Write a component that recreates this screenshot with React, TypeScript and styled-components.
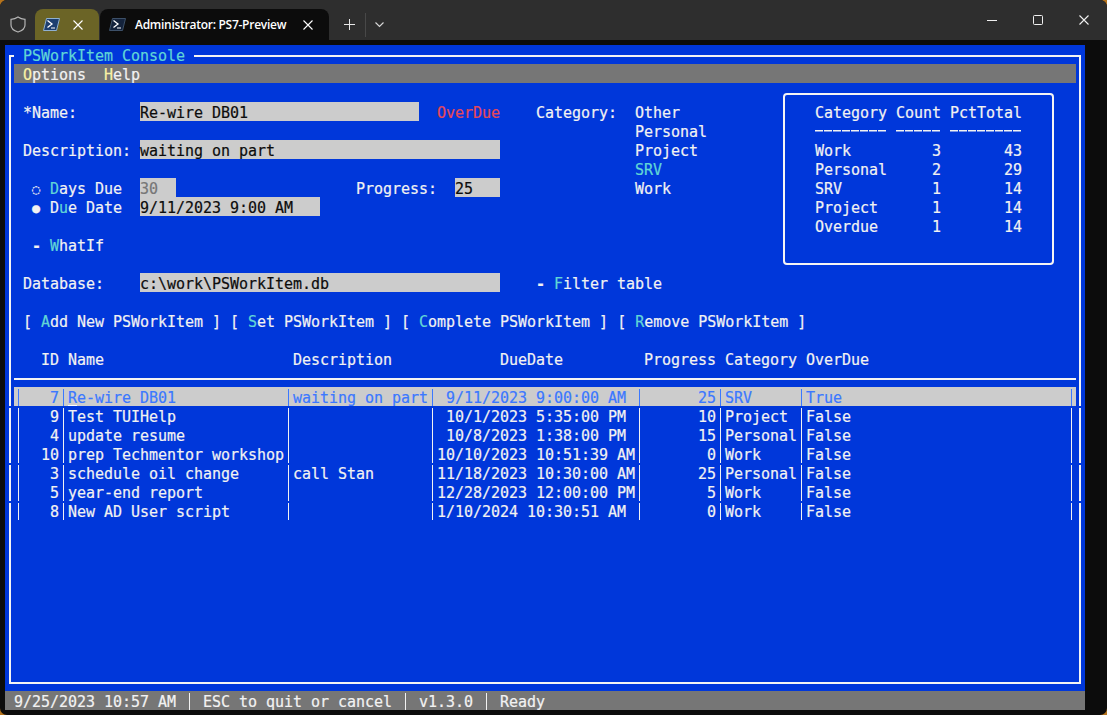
import React from "react";
import styled, { createGlobalStyle } from "styled-components";

const CW = 9;
const BLUE = "#0037DA";
const WHITE = "#F2F2F2";
const GRAY = "#767676";
const FIELD = "#CCCCCC";
const CYAN = "#61D6D6";
const ACCENT = "#3B78FF";

const Global = createGlobalStyle`
  html, body { margin: 0; padding: 0; background: #b5731c; }
  #root { width: 1107px; height: 715px; overflow: hidden; }
`;

const Win = styled.div`
  width: 1107px;
  height: 715px;
  background: #0c0c0c;
  border-radius: 7px;
  overflow: hidden;
  display: flex;
  flex-direction: column;
`;

const Strip = styled.header`
  height: 40px;
  flex: none;
  background: #2e2e2e;
  display: flex;
  align-items: flex-end;
`;

const Slot = styled.div<{ $w: number; $h?: number }>`
  width: ${(p) => p.$w}px;
  height: ${(p) => p.$h ?? 31}px;
  flex: none;
  display: flex;
  align-items: center;
  justify-content: center;
`;

const Tab = styled.div<{ $active?: boolean }>`
  height: 31px;
  flex: none;
  box-sizing: border-box;
  width: ${(p) => (p.$active ? 229 : 64)}px;
  margin-right: ${(p) => (p.$active ? 4 : 1)}px;
  padding-left: ${(p) => (p.$active ? 9 : 8)}px;
  background: ${(p) => (p.$active ? "#0c0c0c" : "#6b6426")};
  border-radius: 8px 8px 0 0;
  display: flex;
  align-items: center;
`;

const TabTitle = styled.span`
  font-family: "Open Sans", "Noto Sans", sans-serif;
  font-size: 12px;
  font-weight: 600;
  letter-spacing: -0.27px;
  color: #ffffff;
  margin-left: 9px;
  width: 168px;
  flex: none;
  white-space: nowrap;
`;

const TabClose = styled.span<{ $gap: number }>`
  margin-left: ${(p) => p.$gap}px;
  display: flex;
`;

const StripSep = styled.div`
  width: 1px;
  height: 24px;
  flex: none;
  margin-bottom: 3px;
  background: #484848;
`;

const StripFill = styled.div`
  flex: 1;
`;

const Screen = styled.main`
  width: 1080px;
  height: 665px;
  margin: 5px 0 0 5px;
  background: ${BLUE};
  color: ${WHITE};
  font-family: "DejaVu Sans Mono", "Liberation Mono", monospace;
  font-size: 15px;
  letter-spacing: -0.03px;
  line-height: 23px;
  -webkit-text-stroke: 0.2px;
  display: flex;
  flex-direction: column;
`;

const Frame = styled.section`
  position: relative;
  box-sizing: border-box;
  width: 1072px;
  height: 629px;
  flex: none;
  margin: 10px 4px 7px 4px;
  padding: 7px 3px 0 3px;
  border: 2px solid #f4f4f4;
`;

const FrameTitle = styled.h1`
  position: absolute;
  left: 3px;
  top: -12px;
  margin: 0;
  padding: 0 9px;
  background: ${BLUE};
  color: ${CYAN};
  font: inherit;
  height: 19px;
`;

const Menu = styled.nav`
  height: 19px;
  background: ${GRAY};
  padding-left: ${CW}px;
  display: flex;
  white-space: pre;
`;

const Line = styled.div`
  height: 19px;
  display: flex;
  white-space: pre;
`;

const Gap = styled.span<{ $w: number }>`
  width: ${(p) => p.$w * CW}px;
  flex: none;
`;

const Cell = styled.span<{ $w: number; $end?: boolean; $color?: string }>`
  width: ${(p) => p.$w * CW}px;
  flex: none;
  white-space: pre;
  text-align: ${(p) => (p.$end ? "right" : "left")};
  color: ${(p) => p.$color ?? "inherit"};
`;

const Field = styled(Cell)<{ $off?: boolean }>`
  background: ${FIELD};
  color: ${(p) => (p.$off ? GRAY : "#0C0C0C")};
`;

const CheckMark = styled(Cell)`
  font-weight: 700;
`;

const Hot = styled.span`
  color: ${CYAN};
`;

const MenuHot = styled.span`
  color: #f9f1a5;
`;

const Radio = styled.span`
  width: ${2 * CW}px;
  flex: none;
  font-size: 13.5px;
  text-align: left;
`;

const Top = styled.div`
  display: flex;
  height: ${19 * 14}px;
`;

const Form = styled.div`
  width: ${85 * CW}px;
  flex: none;
  padding-top: 19px;
`;

const StatBox = styled.aside`
  box-sizing: border-box;
  width: 271px;
  height: 172px;
  flex: none;
  margin: 10px 0 0 4px;
  padding: 7px 0 0 30px;
  border: 2px solid #f4f4f4;
  border-radius: 4px;
`;

const DashCell = styled(Cell)`
  color: transparent;
  background: repeating-linear-gradient(90deg, ${WHITE} 0 8px, transparent 8px 9px) 0 50% / 100% 1.5px no-repeat;
`;

const Rule = styled.div`
  height: 2px;
  margin: 10px 0 7px;
  background: #f4f4f4;
`;

const TableRow = styled.div<{ $sel?: boolean; $cut?: boolean }>`
  position: relative;
  height: 19px;
  display: flex;
  white-space: pre;
  background: ${(p) => (p.$sel ? FIELD : "transparent")};
  color: ${(p) => (p.$sel ? ACCENT : "inherit")};
  ${(p) =>
    p.$cut
      ? `
    &::before, &::after {
      content: "";
      position: absolute;
      top: 0;
      width: 2px;
      height: 2px;
      background: ${BLUE};
    }
    &::before { left: -5px; }
    &::after { right: -5px; }
  `
      : ""}
`;

const Bar = styled.span<{ $cut?: boolean }>`
  width: ${CW}px;
  flex: none;
  display: flex;
  justify-content: center;
  &::before {
    content: "";
    width: 1.5px;
    margin-top: ${(p) => (p.$cut ? 2 : 0)}px;
    background: currentColor;
  }
`;

const NameCell = styled(Cell)`
  position: relative;
`;

const Cursor = styled.i`
  position: absolute;
  left: 0;
  bottom: 0;
  width: ${CW}px;
  height: 1px;
  background: #ffffff;
`;

const Status = styled.footer`
  height: 19px;
  flex: none;
  display: flex;
  white-space: pre;
  background: ${GRAY};
`;

type Row = { id: string; name: string; desc: string; due: string; prog: string; cat: string; over: string };

const rows: Row[] = [
  { id: "7", name: "Re-wire DB01", desc: "waiting on part", due: " 9/11/2023 9:00:00 AM", prog: "25", cat: "SRV", over: "True" },
  { id: "9", name: "Test TUIHelp", desc: "", due: " 10/1/2023 5:35:00 PM", prog: "10", cat: "Project", over: "False" },
  { id: "4", name: "update resume", desc: "", due: " 10/8/2023 1:38:00 PM", prog: "15", cat: "Personal", over: "False" },
  { id: "10", name: "prep Techmentor workshop", desc: "", due: "10/10/2023 10:51:39 AM", prog: "0", cat: "Work", over: "False" },
  { id: "3", name: "schedule oil change", desc: "call Stan", due: "11/18/2023 10:30:00 AM", prog: "25", cat: "Personal", over: "False" },
  { id: "5", name: "year-end report", desc: "", due: "12/28/2023 12:00:00 PM", prog: "5", cat: "Work", over: "False" },
  { id: "8", name: "New AD User script", desc: "", due: "1/10/2024 10:30:51 AM", prog: "0", cat: "Work", over: "False" },
];
const cutRows = new Set([0, 1, 4, 6]);

const stats = [
  ["Work", "3", "43"],
  ["Personal", "2", "29"],
  ["SRV", "1", "14"],
  ["Project", "1", "14"],
  ["Overdue", "1", "14"],
];

const PsIcon = ({ dark }: { dark?: boolean }) => (
  <svg width="17" height="13" viewBox="0 0 17 13" fill="none">
    <path d="M3.5 .5H16.5L13.5 12.5H.5Z" fill={dark ? "#14233c" : "#1d3f70"} stroke={dark ? "#3d5068" : "#8fb0d0"} strokeWidth="1" />
    <path d="M4.5 2.5 9 6 4.5 9.5" stroke="#fff" strokeWidth="1.3" />
    <path d="M8 10H12" stroke="#fff" strokeWidth="1.2" />
  </svg>
);

const Cross = ({ size = 10, color = "#fff" }: { size?: number; color?: string }) => (
  <svg width={size} height={size} viewBox="0 0 10 10" fill="none">
    <path d="M.5 .5 9.5 9.5M9.5 .5 .5 9.5" stroke={color} strokeWidth="1.1" />
  </svg>
);

export default function App() {
  return (
    <Win>
      <Global />
      <Strip>
        <Slot $w={35}>
          <svg width="16" height="17" viewBox="0 0 16 17" fill="none">
            <path d="M8 1C5.8 2.6 3.6 3.2 1 3.3V9c0 3.4 3 5.8 7 7 4-1.2 7-3.6 7-7V3.3C12.4 3.2 10.2 2.6 8 1Z" stroke="#b4b4b4" strokeWidth="1.2" />
          </svg>
        </Slot>
        <Tab>
          <PsIcon />
          <TabClose $gap={13}>
            <Cross />
          </TabClose>
        </Tab>
        <Tab $active>
          <PsIcon dark />
          <TabTitle>Administrator: PS7-Preview</TabTitle>
          <TabClose $gap={0}>
            <Cross />
          </TabClose>
        </Tab>
        <Slot $w={32}>
          <svg width="11" height="11" viewBox="0 0 11 11" fill="none">
            <path d="M5.5 0V11M0 5.5H11" stroke="#e8e8e8" strokeWidth="1" />
          </svg>
        </Slot>
        <StripSep />
        <Slot $w={26}>
          <svg width="9" height="6" viewBox="0 0 9 6" fill="none">
            <path d="M.5 .5 4.5 4.5 8.5 .5" stroke="#d8d8d8" strokeWidth="1.1" />
          </svg>
        </Slot>
        <StripFill />
        <Slot $w={46} $h={40}>
          <svg width="10" height="1" viewBox="0 0 10 1">
            <rect width="10" height="1" fill="#f0f0f0" />
          </svg>
        </Slot>
        <Slot $w={46} $h={40}>
          <svg width="10" height="10" viewBox="0 0 10 10" fill="none">
            <rect x=".5" y=".5" width="9" height="9" rx="1" stroke="#f0f0f0" />
          </svg>
        </Slot>
        <Slot $w={46} $h={40}>
          <Cross color="#f0f0f0" />
        </Slot>
      </Strip>
      <Screen>
        <Frame>
          <FrameTitle>PSWorkItem Console</FrameTitle>
          <Menu>
            <span>
              <MenuHot>O</MenuHot>ptions
            </span>
            <Gap $w={2} />
            <span>
              <MenuHot>H</MenuHot>elp
            </span>
          </Menu>
          <Top>
            <Form>
              <Line>
                <Gap $w={1} />
                <Cell $w={13}>*Name:</Cell>
                <Field $w={31}>Re-wire DB01</Field>
                <Gap $w={2} />
                <Cell $w={11} $color="#E74856">OverDue</Cell>
                <Cell $w={11}>Category:</Cell>
                <Cell $w={8}>Other</Cell>
              </Line>
              <Line>
                <Gap $w={69} />
                <Cell $w={8}>Personal</Cell>
              </Line>
              <Line>
                <Gap $w={1} />
                <Cell $w={13}>Description:</Cell>
                <Field $w={40}>waiting on part</Field>
                <Gap $w={15} />
                <Cell $w={8}>Project</Cell>
              </Line>
              <Line>
                <Gap $w={69} />
                <Cell $w={8} $color={CYAN}>SRV</Cell>
              </Line>
              <Line>
                <Gap $w={2} />
                <Radio>◌</Radio>
                <Cell $w={10}>
                  <Hot>D</Hot>ays Due
                </Cell>
                <Field $w={4} $off>30</Field>
                <Gap $w={20} />
                <Cell $w={11}>Progress:</Cell>
                <Field $w={5}>25</Field>
                <Gap $w={15} />
                <Cell $w={8}>Work</Cell>
              </Line>
              <Line>
                <Gap $w={2} />
                <Radio>●</Radio>
                <Cell $w={10}>
                  D<Hot>u</Hot>e Date
                </Cell>
                <Field $w={20}>9/11/2023 9:00 AM</Field>
              </Line>
              <Line />
              <Line>
                <Gap $w={2} />
                <CheckMark $w={2}>-</CheckMark>
                <Cell $w={10}>
                  <Hot>W</Hot>hatIf
                </Cell>
              </Line>
              <Line />
              <Line>
                <Gap $w={1} />
                <Cell $w={13}>Database:</Cell>
                <Field $w={40}>c:\work\PSWorkItem.db</Field>
                <Gap $w={4} />
                <CheckMark $w={2}>-</CheckMark>
                <Cell $w={14}>
                  <Hot>F</Hot>ilter table
                </Cell>
              </Line>
              <Line />
              <Line>
                <Gap $w={1} />
                <span>
                  {"[ "}
                  <Hot>A</Hot>
                  {"dd New PSWorkItem ] [ "}
                  <Hot>S</Hot>
                  {"et PSWorkItem ] [ "}
                  <Hot>C</Hot>
                  {"omplete PSWorkItem ] [ "}
                  <Hot>R</Hot>
                  {"emove PSWorkItem ]"}
                </span>
              </Line>
            </Form>
            <StatBox>
              <Line>
                <Cell $w={9}>Category</Cell>
                <Cell $w={6}>Count</Cell>
                <Cell $w={8}>PctTotal</Cell>
              </Line>
              <Line>
                <DashCell $w={8}>--------</DashCell>
                <Gap $w={1} />
                <DashCell $w={5}>-----</DashCell>
                <Gap $w={1} />
                <DashCell $w={8}>--------</DashCell>
              </Line>
              {stats.map(([c, n, p]) => (
                <Line key={c}>
                  <Cell $w={9}>{c}</Cell>
                  <Cell $w={5} $end>{n}</Cell>
                  <Gap $w={1} />
                  <Cell $w={8} $end>{p}</Cell>
                </Line>
              ))}
            </StatBox>
          </Top>
          <Line>
            <Gap $w={3} />
            <Cell $w={3}>ID</Cell>
            <Cell $w={25}>Name</Cell>
            <Cell $w={23}>Description</Cell>
            <Cell $w={16}>DueDate</Cell>
            <Cell $w={9}>Progress</Cell>
            <Cell $w={9}>Category</Cell>
            <Cell $w={8}>OverDue</Cell>
          </Line>
          <Rule />
          {rows.map((r, i) => {
            const cut = cutRows.has(i);
            return (
              <TableRow key={r.id} $sel={i === 0} $cut={cut && i !== 0}>
                <Bar $cut={cut} />
                <Cell $w={4} $end>{r.id}</Cell>
                <Bar $cut={cut} />
                <NameCell $w={24}>
                  {r.name}
                  {i === 0 && <Cursor />}
                </NameCell>
                <Bar $cut={cut} />
                <Cell $w={15}>{r.desc}</Cell>
                <Bar $cut={cut} />
                <Cell $w={22}>{r.due}</Cell>
                <Bar $cut={cut} />
                <Cell $w={8} $end>{r.prog}</Cell>
                <Bar $cut={cut} />
                <Cell $w={8}>{r.cat}</Cell>
                <Bar $cut={cut} />
                <Cell $w={29}>{r.over}</Cell>
                <Bar $cut={cut} />
              </TableRow>
            );
          })}
        </Frame>
        <Status>
          <Gap $w={1} />
          <Cell $w={18}>9/25/2023 10:57 AM</Cell>
          <Gap $w={1} />
          <Bar $cut />
          <Gap $w={1} />
          <Cell $w={21}>ESC to quit or cancel</Cell>
          <Gap $w={1} />
          <Bar $cut />
          <Gap $w={1} />
          <Cell $w={6}>v1.3.0</Cell>
          <Gap $w={1} />
          <Bar $cut />
          <Gap $w={1} />
          <Cell $w={5}>Ready</Cell>
        </Status>
      </Screen>
    </Win>
  );
}
